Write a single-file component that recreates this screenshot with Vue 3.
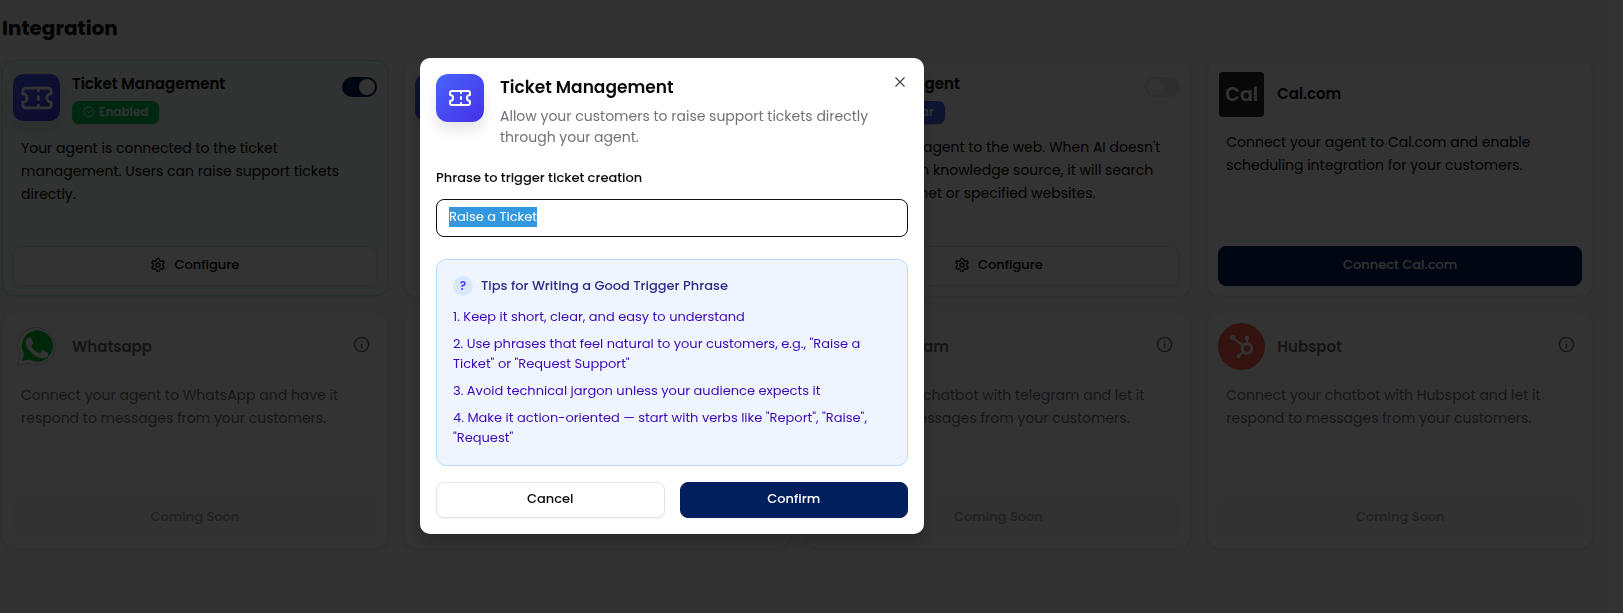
<script setup>
import { ref, onMounted } from 'vue'

const phrase = ref('Raise a Ticket')
const phraseInput = ref(null)

const cards = ref([
  { id: 'ticket', icon: 'ticket', title: 'Ticket Management', badge: 'Enabled', tone: 'green', toggle: true, enabled: true, lines: ['Your agent is connected to the ticket', 'management. Users can raise support tickets', 'directly.'], action: 'Configure' },
  { id: 'second', icon: 'ticket', lines: [] },
  { id: 'web', icon: 'ticket', title: 'Web Agent', badge: 'Popular', tone: 'blue', toggle: true, enabled: false, lines: ['Connect your agent to the web. When AI doesn\'t', 'find answers in knowledge source, it will search', 'from the internet or specified websites.'], action: 'Configure' },
  { id: 'cal', icon: 'cal', title: 'Cal.com', lines: ['Connect your agent to Cal.com and enable', 'scheduling integration for your customers.'], action: 'Connect Cal.com', primary: true },
  { id: 'whatsapp', icon: 'whatsapp', title: 'Whatsapp', soon: true, lines: ['Connect your agent to WhatsApp and have it', 'respond to messages from your customers.'], action: 'Coming Soon' },
  { id: 'sixth', icon: 'none', lines: [] },
  { id: 'telegram', icon: 'none', title: 'Telegram', soon: true, lines: ['Connect your chatbot with telegram and let it', 'respond to messages from your customers.'], action: 'Coming Soon' },
  { id: 'hubspot', icon: 'hubspot', title: 'Hubspot', soon: true, lines: ['Connect your chatbot with Hubspot and let it', 'respond to messages from your customers.'], action: 'Coming Soon' },
])

const tips = [
  '1. Keep it short, clear, and easy to understand',
  '2. Use phrases that feel natural to your customers, e.g., "Raise a Ticket" or "Request Support"',
  '3. Avoid technical jargon unless your audience expects it',
  '4. Make it action-oriented — start with verbs like "Report", "Raise", "Request"',
]

onMounted(() => {
  phraseInput.value.focus()
  phraseInput.value.select()
})
</script>

<template>
  <div class="page">
    <main class="content">
      <h1>Integration</h1>
      <div class="grid">
        <section v-for="c in cards" :key="c.id" class="card" :class="{ active: c.enabled, soon: c.soon }">
          <header class="card-head" :class="{ top: c.icon === 'ticket' }">
            <span v-if="c.icon === 'ticket'" class="tile">
              <svg viewBox="0 0 24 24" width="34" height="34" class="stroke"><path d="M2 9a3 3 0 0 1 0 6v2a2 2 0 0 0 2 2h16a2 2 0 0 0 2-2v-2a3 3 0 0 1 0-6V7a2 2 0 0 0-2-2H4a2 2 0 0 0-2 2Z" /><path d="M13 5v2M13 17v2M13 11v2" /></svg>
            </span>
            <span v-else-if="c.icon === 'cal'" class="logo cal">Cal</span>
            <svg v-else-if="c.icon === 'whatsapp'" class="logo" viewBox="0 0 48 48">
              <path d="M4.300 43.600 7 33.200A19.300 19.300 0 1 1 15 41Z" fill="#fff" stroke="#c8c8d0" stroke-width="1" />
              <path d="M9.200 38.500 11.200 31.600A15.900 15.900 0 1 1 16.800 37.200Z" fill="#00c02e" />
              <path d="M18.700 15.700c-.4-.9-.8-.9-1.200-.9h-1.100c-.4 0-1 .2-1.500.8s-2 2-2 4.700 2 5.400 2.300 5.800 4 6.300 9.800 8.600c4.800 1.900 5.800 1.500 6.900 1.400s3.400-1.400 3.800-2.700.5-2.500.3-2.700-.5-.4-1.100-.7-3.400-1.700-3.900-1.900-.9-.3-1.300.3-1.500 1.900-1.800 2.200-.7.400-1.200.1-2.400-.9-4.600-2.800c-1.700-1.500-2.800-3.400-3.200-3.900s0-.9.300-1.200l.8-1 .6-.9c.2-.4.100-.7 0-1s-1.200-3.100-1.900-4.200Z" fill="#fff" />
            </svg>
            <svg v-else-if="c.icon === 'hubspot'" class="logo" viewBox="0 0 48 48">
              <circle cx="24" cy="24" r="24" fill="#ff5c4d" />
              <g fill="none" stroke="#fff"><circle cx="29.500" cy="26" r="4.900" stroke-width="3" /><path d="M15 15 25.500 23M29.500 16v5M22 33l4-4" stroke-width="2.200" /></g>
              <g fill="#fff"><circle cx="15" cy="14.600" r="2.600" /><circle cx="29.500" cy="15.400" r="2.300" /><circle cx="21" cy="34" r="2" /></g>
            </svg>
            <span v-else class="logo"></span>
            <div v-if="c.title" class="heading">
              <h2>{{ c.title }}</h2>
              <span v-if="c.badge" class="badge" :class="c.tone">
                <svg v-if="c.tone === 'green'" viewBox="0 0 24 24" width="12" height="12" class="stroke"><path d="M21.800 10A10 10 0 1 1 17 3.300M9 11l3 3L22 4" /></svg>
                {{ c.badge }}
              </span>
            </div>
            <input v-if="c.toggle" v-model="c.enabled" type="checkbox" role="switch" class="switch" :aria-label="c.title" />
            <svg v-if="c.soon" class="info stroke" viewBox="0 0 24 24" width="17" height="17"><circle cx="12" cy="12" r="10" /><path d="M12 16v-4M12 8h.01" /></svg>
          </header>
          <p v-if="c.lines.length"><template v-for="(l, i) in c.lines" :key="i"><br v-if="i" />{{ l }}</template></p>
          <button v-if="c.action" type="button" class="action" :class="{ primary: c.primary }" :disabled="c.soon">
            <svg v-if="c.toggle" viewBox="0 0 24 24" width="16" height="16" class="stroke"><path d="M12.220 2h-.44a2 2 0 0 0-2 2v.18a2 2 0 0 1-1 1.730l-.43.25a2 2 0 0 1-2 0l-.15-.08a2 2 0 0 0-2.730.73l-.22.38a2 2 0 0 0 .73 2.730l.15.1a2 2 0 0 1 1 1.720v.51a2 2 0 0 1-1 1.740l-.15.09a2 2 0 0 0-.73 2.730l.22.38a2 2 0 0 0 2.730.73l.15-.08a2 2 0 0 1 2 0l.43.25a2 2 0 0 1 1 1.730V20a2 2 0 0 0 2 2h.44a2 2 0 0 0 2-2v-.18a2 2 0 0 1 1-1.730l.43-.25a2 2 0 0 1 2 0l.15.08a2 2 0 0 0 2.730-.73l.22-.39a2 2 0 0 0-.73-2.730l-.15-.08a2 2 0 0 1-1-1.740v-.5a2 2 0 0 1 1-1.740l.15-.09a2 2 0 0 0 .73-2.730l-.22-.38a2 2 0 0 0-2.730-.73l-.15.08a2 2 0 0 1-2 0l-.43-.25a2 2 0 0 1-1-1.730V4a2 2 0 0 0-2-2z" /><circle cx="12" cy="12" r="3" /></svg>
            {{ c.action }}
          </button>
        </section>
      </div>
    </main>
    <div class="gutter"></div>
  </div>

  <div class="overlay">
    <form class="dialog" role="dialog" aria-labelledby="dlg-title" @submit.prevent>
      <header class="dlg-head">
        <span class="tile large">
          <svg viewBox="0 0 24 24" width="24" height="24" class="stroke"><path d="M2 9a3 3 0 0 1 0 6v2a2 2 0 0 0 2 2h16a2 2 0 0 0 2-2v-2a3 3 0 0 1 0-6V7a2 2 0 0 0-2-2H4a2 2 0 0 0-2 2Z" /><path d="M13 5v2M13 17v2M13 11v2" /></svg>
        </span>
        <div class="dlg-copy">
          <h2 id="dlg-title">Ticket Management</h2>
          <p>Allow your customers to raise support tickets directly<br />through your agent.</p>
        </div>
        <button type="button" class="close" aria-label="Close">
          <svg viewBox="0 0 10 10" width="10" height="10"><path d="M.5.5l9 9M9.500.5l-9 9" stroke="currentColor" stroke-width="1.200" /></svg>
        </button>
      </header>
      <label for="phrase">Phrase to trigger ticket creation</label>
      <input id="phrase" ref="phraseInput" v-model="phrase" type="text" class="phrase" />
      <section class="tips">
        <h3><span class="q">?</span>Tips for Writing a Good Trigger Phrase</h3>
        <ul><li v-for="t in tips" :key="t">{{ t }}</li></ul>
      </section>
      <footer>
        <button type="button" class="btn">Cancel</button>
        <button type="submit" class="btn confirm">Confirm</button>
      </footer>
    </form>
  </div>
</template>

<style>
body { margin: 0; background: #f7f7f7; }
</style>

<style scoped>
.page, .overlay, .overlay input, button { font-family: Poppins, Inter, "Open Sans", sans-serif; }
* { box-sizing: border-box; }
h1, h2, h3, p, ul { margin: 0; padding: 0; }
.stroke { fill: none; stroke: currentColor; stroke-width: 2; stroke-linecap: round; stroke-linejoin: round; flex: none; }
.page { display: flex; min-height: 100vh; background: #f7f7f7; color: #0a0a0a; }
.content { flex: 1; padding: 12px 15px 32px 2px; }
.gutter { width: 15px; background: #f3f3f3; border-left: 8px solid #fff; }
h1 { font-size: 20px; line-height: 32px; font-weight: 700; margin-bottom: 16px; }
.grid { display: grid; grid-template-columns: repeat(4, minmax(0, 1fr)); gap: 16px; }
.card { display: flex; flex-direction: column; min-height: 236px; padding: 10px 10px 9px; border: 1px solid #f3f3f3; border-radius: 12px; background: #fff; box-shadow: 0 1px 3px rgba(0, 0, 0, .1); }
.card.active { background: #f3faf7; border-color: #a4f4cf; }
.card-head { display: flex; align-items: center; gap: 12px; }
.card-head.top { align-items: flex-start; padding-top: 3px; }
.tile { display: flex; flex: none; align-items: center; justify-content: center; width: 47px; height: 47px; border-radius: 10px; color: #fff; background: linear-gradient(135deg, #4a64fb, #4530e8); box-shadow: 0 8px 14px rgba(0, 0, 0, .1); }
.logo { flex: none; width: 47px; height: 47px; }
.cal { display: flex; align-items: center; justify-content: center; width: 45px; height: 45px; margin: 1px 1px 0; border-radius: 4px; background: #292929; color: #fff; font-size: 19px; font-weight: 600; }
.heading { flex: 1; }
.heading h2 { font-size: 15px; line-height: 20px; font-weight: 600; }
.badge { display: inline-flex; align-items: center; gap: 4px; height: 23px; margin-top: 7px; padding: 0 11px 2px; border-radius: 7px; color: #fff; font-size: 12px; line-height: 16px; font-weight: 600; box-shadow: 0 1px 2px rgba(0, 0, 0, .2); }
.green { background: #00c950; }
.blue { background: #4468f5; }
.switch { appearance: none; display: flex; align-items: center; width: 35px; height: 20px; margin: 3px 0; padding: 2px; border-radius: 10px; background: #e5e5e5; }
.switch::before { content: ""; width: 16px; height: 16px; border-radius: 50%; background: #fff; }
.switch:checked { background: #001f5c; justify-content: flex-end; }
.info { margin: 0 7px 4px 0; }
.card p { padding: 14px 8px; font-size: 14px; line-height: 23px; color: #0a0a0a; white-space: nowrap; }
.card .top + p { padding-top: 12px; }
.action { display: flex; align-items: center; justify-content: center; gap: 8px; height: 40px; margin-top: auto; padding: 0 6px 2px; border: 1px solid #e5e5e5; border-radius: 8px; background: #fff; color: #0a0a0a; font-size: 13px; font-weight: 500; box-shadow: 0 1px 2px rgba(0, 0, 0, .05); }
.action.primary { background: #001f5c; border-color: #001f5c; color: #fff; }
.soon h2, .soon p, .soon .info { opacity: .6; }
.soon .action { background: #f8f8f8; border-color: #f8f8f8; color: #a0a0a0; box-shadow: none; }
.overlay { position: fixed; inset: 0; display: flex; align-items: flex-start; justify-content: center; padding: 58px 279px 16px 0; background: rgba(0, 0, 0, .8); }
.dialog { width: 504px; padding: 16px; border-radius: 10px; background: #fff; color: #0a0a0a; box-shadow: 0 10px 16px rgba(0, 0, 0, .2); }
.dlg-head { display: flex; align-items: flex-start; gap: 16px; }
.tile.large { width: 48px; height: 48px; border-radius: 12px; }
.dlg-copy { flex: 1; }
.dlg-copy h2 { font-size: 17px; line-height: 26px; font-weight: 600; }
.dlg-copy p { margin-top: 6px; color: #71717a; font-size: 14px; line-height: 21px; white-space: nowrap; }
.close { display: flex; padding: 3px; border: 0; background: none; color: #444; }
label { display: block; margin: 20px 0 11px; font-size: 13px; line-height: 20px; font-weight: 500; }
.phrase { display: block; width: 100%; height: 38px; padding: 0 12px 2px; border: 1px solid #111; border-radius: 8px; outline: none; font-size: 13px; color: #0a0a0a; }
.phrase::selection { background: #3297df; color: #fff; }
.tips { margin: 22px 0 16px; padding: 16px 16px 17px; border: 1px solid #b8d9ff; border-radius: 10px; background: #eef5ff; }
.tips h3 { display: flex; align-items: center; gap: 8px; color: #312c85; font-size: 13px; line-height: 20px; font-weight: 500; }
.q { width: 20px; height: 20px; border-radius: 50%; background: #d8e8ff; color: #4f39f6; text-align: center; font-size: 12px; font-weight: 600; }
.tips ul { display: grid; gap: 7px; margin-top: 11px; list-style: none; }
.tips li { color: #3e08b4; font-size: 13px; line-height: 20px; }
.dialog footer { display: grid; grid-template-columns: 1fr 1fr; gap: 15px; }
.btn { height: 36px; padding: 0 6px 2px; border: 1px solid #e5e5e5; border-radius: 8px; background: #fff; color: #0a0a0a; font-size: 13px; font-weight: 500; box-shadow: 0 1px 2px rgba(0, 0, 0, .06); }
.confirm { background: #001f5c; border-color: #001f5c; color: #fff; }
</style>
